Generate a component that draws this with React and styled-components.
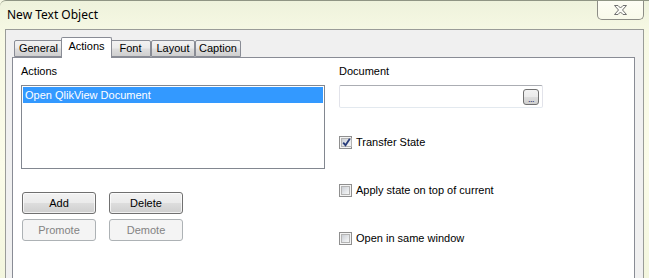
import React from "react";
import styled, { createGlobalStyle } from "styled-components";

const GlobalStyle = createGlobalStyle`
  html, body {
    margin: 0;
    padding: 0;
    background: #f6f8e4;
  }
`;

const UI_FONT = `"Liberation Sans", Arial, sans-serif`;

const Window = styled.div`
  width: 649px;
  height: 278px;
  overflow: hidden;
  display: flex;
  flex-direction: column;
  box-sizing: border-box;
  border-top: 1px solid #8f9584;
  border-top-left-radius: 6px;
  background: linear-gradient(180deg, #eef2dc 0%, #f7f9e4 12%, #fbfce9 60%, #f3f6de 100%);
  font-family: ${UI_FONT};
  font-size: 11px;
  color: #000;
`;

const TitleBar = styled.div`
  height: 28px;
  display: flex;
  justify-content: space-between;
  align-items: flex-start;
  flex-shrink: 0;
`;

const Title = styled.div`
  margin: 6px 0 0 7px;
  font-family: "Noto Sans", "Open Sans", sans-serif;
  font-size: 12px;
  line-height: 16px;
  color: #000;
`;

const CloseButton = styled.div`
  width: 45px;
  height: 18px;
  margin-right: 5px;
  border: 1px solid #8d8d86;
  border-top: none;
  border-radius: 0 0 5px 5px;
  background: linear-gradient(180deg, #fdfdf4 0%, #f9faea 100%);
  display: flex;
  align-items: center;
  justify-content: center;
`;

const Client = styled.div`
  flex: 1;
  margin: 0 5px;
  display: flex;
  flex-direction: column;
  border: 1px solid #9a9c98;
  border-bottom: none;
  background: #f0f0f0;
  padding: 7px 8px 0 6px;
`;

const TabStrip = styled.div`
  height: 20px;
  display: flex;
  align-items: flex-end;
  padding-left: 2px;
`;

const Tab = styled.div`
  box-sizing: border-box;
  width: ${(p) => p.$w}px;
  height: ${(p) => (p.$active ? 21 : 17)}px;
  margin: ${(p) => (p.$active ? "0 -2px -1px" : "0")};
  position: relative;
  z-index: ${(p) => (p.$active ? 2 : 1)};
  border: 1px solid #898c95;
  border-bottom: ${(p) => (p.$active ? "none" : "1px solid #898c95")};
  border-right: ${(p) => (p.$joined ? "none" : "1px solid #898c95")};
  border-radius: 2px 2px 0 0;
  background: ${(p) =>
    p.$active
      ? "#fff"
      : "linear-gradient(180deg, #f2f2f2 0%, #ebebeb 45%, #dddddd 55%, #cfcfcf 100%)"};
  display: flex;
  justify-content: center;
  padding-top: ${(p) => (p.$active ? 2 : 1)}px;
  line-height: 13px;
`;

const Panel = styled.div`
  flex: 1;
  background: #fff;
  border: 1px solid #898c95;
  border-bottom: none;
  display: grid;
  grid-template-columns: 304px 204px;
  column-gap: 14px;
  align-content: start;
  padding: 7px 0 0 8px;
`;

const Column = styled.div`
  display: flex;
  flex-direction: column;
`;

const Label = styled.div`
  line-height: 13px;
  height: 13px;
  margin-bottom: 7px;
`;

const ListBox = styled.div`
  box-sizing: border-box;
  height: 84px;
  border: 1px solid #828790;
  padding: 1px;
`;

const ListItem = styled.div`
  height: 16px;
  line-height: 16px;
  padding-left: 2px;
  background: ${(p) => (p.$selected ? "#3399ff" : "transparent")};
  color: ${(p) => (p.$selected ? "#fff" : "#000")};
`;

const ButtonGrid = styled.div`
  margin: 23px 0 0 1px;
  display: grid;
  grid-template-columns: 74px 74px;
  column-gap: 13px;
  row-gap: 5px;
`;

const Button = styled.div`
  box-sizing: border-box;
  height: 22px;
  border: 1px solid ${(p) => (p.$disabled ? "#adb2b5" : "#707070")};
  border-radius: 3px;
  background: ${(p) =>
    p.$disabled
      ? "#f4f4f4"
      : "linear-gradient(180deg, #f2f2f2 0%, #ebebeb 48%, #dddddd 52%, #cfcfcf 100%)"};
  color: ${(p) => (p.$disabled ? "#838383" : "#000")};
  display: flex;
  align-items: center;
  justify-content: center;
  box-shadow: ${(p) => (p.$disabled ? "none" : "inset 0 0 0 1px rgba(255,255,255,0.7)")};
`;

const TextField = styled.div`
  box-sizing: border-box;
  height: 23px;
  border: 1px solid #e2e3ea;
  border-top-color: #abadb3;
  border-bottom-color: #e3e9ef;
  border-radius: 2px;
  display: flex;
  align-items: center;
  justify-content: flex-end;
  padding-right: 3px;
`;

const BrowseButton = styled.div`
  box-sizing: border-box;
  width: 16px;
  height: 16px;
  border: 1px solid #707070;
  border-radius: 3px;
  background: linear-gradient(180deg, #f2f2f2 0%, #ebebeb 48%, #dddddd 52%, #cfcfcf 100%);
  font-size: 9px;
  line-height: 10px;
  color: #1a1a60;
  display: flex;
  align-items: flex-end;
  justify-content: center;
  letter-spacing: -0.5px;
`;

const Checks = styled.div`
  margin-top: 28px;
  display: flex;
  flex-direction: column;
  gap: 35px;
`;

const CheckRow = styled.div`
  display: flex;
  align-items: center;
  gap: 4px;
  height: 13px;
  line-height: 13px;
`;

const CheckBox = styled.div`
  box-sizing: border-box;
  width: 13px;
  height: 13px;
  border: 1px solid #8f8f8f;
  background: #f4f4f4;
  padding: 1px;
  display: flex;
`;

const CheckInner = styled.div`
  flex: 1;
  border: 1px solid #b4b4b4;
  background: linear-gradient(135deg, #cbcfd5 0%, #e6e8eb 60%, #f6f6f6 100%);
  display: flex;
  align-items: center;
  justify-content: center;
`;

const tabs = [
  { label: "General", w: 49 },
  { label: "Actions", w: 51, active: true },
  { label: "Font", w: 41 },
  { label: "Layout", w: 44, joined: false },
  { label: "Caption", w: 46 },
];

const CloseGlyph = () => (
  <svg width="15" height="10" viewBox="0 0 15 10">
    <path
      d="M1.5 0.5 H5 L7.5 3 L10 0.5 H13.5 L9.5 5 L13.5 9.5 H10 L7.5 7 L5 9.5 H1.5 L5.5 5 Z"
      fill="#fbfbf6"
      stroke="#707070"
      strokeWidth="1"
      strokeLinejoin="round"
    />
  </svg>
);

const Check = ({ checked, label }) => (
  <CheckRow>
    <CheckBox>
      <CheckInner>
        {checked && (
          <svg width="9" height="9" viewBox="0 0 9 9">
            <path d="M1.2 4.6 L3.5 7.2 L7.8 0.8" fill="none" stroke="#283c7a" strokeWidth="1.8" />
          </svg>
        )}
      </CheckInner>
    </CheckBox>
    <span>{label}</span>
  </CheckRow>
);

export default function App() {
  return (
    <>
      <GlobalStyle />
      <Window>
        <TitleBar>
          <Title>New Text Object</Title>
          <CloseButton>
            <CloseGlyph />
          </CloseButton>
        </TitleBar>
        <Client>
          <TabStrip>
            {tabs.map((t, i) => (
              <Tab key={i} $w={t.w} $active={t.active}>
                {t.label}
              </Tab>
            ))}
          </TabStrip>
          <Panel>
            <Column>
              <Label>Actions</Label>
              <ListBox>
                <ListItem $selected>Open QlikView Document</ListItem>
              </ListBox>
              <ButtonGrid>
                <Button>Add</Button>
                <Button>Delete</Button>
                <Button $disabled>Promote</Button>
                <Button $disabled>Demote</Button>
              </ButtonGrid>
            </Column>
            <Column>
              <Label>Document</Label>
              <TextField>
                <BrowseButton>...</BrowseButton>
              </TextField>
              <Checks>
                <Check checked label="Transfer State" />
                <Check label="Apply state on top of current" />
                <Check label="Open in same window" />
              </Checks>
            </Column>
          </Panel>
        </Client>
      </Window>
    </>
  );
}
